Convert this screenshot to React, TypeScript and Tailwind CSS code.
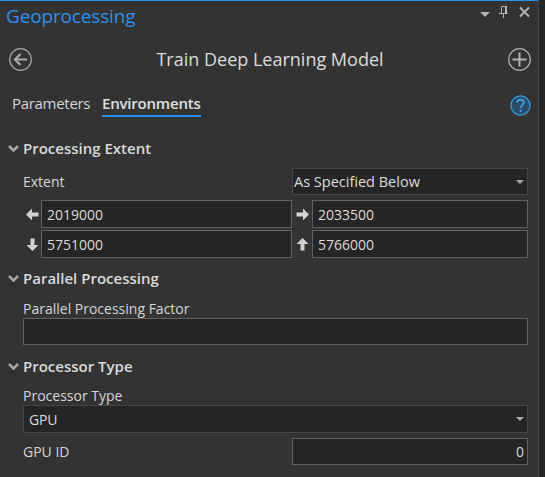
import type { ReactNode } from "react";

const field = "flex items-center border border-[#626262] bg-[#252525] text-[#dcdcdc]";
const select = "flex items-center border border-[#464646] bg-[#252525] text-[#dcdcdc]";

function Caret({ className = "" }: { className?: string }) {
  return (
    <svg className={`block h-1 w-2 shrink-0 ${className}`} viewBox="0 0 8 4">
      <path d="M0 0H8L4 4Z" fill="#a9a9a9" />
    </svg>
  );
}

function Arrow({ rotate = "" }: { rotate?: string }) {
  return (
    <svg className={`block h-[13px] w-[13px] shrink-0 ${rotate}`} viewBox="0 0 13 13">
      <path d="M0 6.5L6 0.5V4.5H12.5V8.5H6V12.5Z" fill="#d2d2d2" />
    </svg>
  );
}

function Heading({ children }: { children: ReactNode }) {
  return (
    <div className="flex h-5 items-center">
      <svg className="ml-2 block h-[9px] w-[11px]" viewBox="0 0 11 9">
        <path d="M1 2L5.5 6.5L10 2" fill="none" stroke="#a6a6a6" strokeWidth="2.6" />
      </svg>
      <h2 className="ml-1 text-[15px] leading-5 font-[550] text-[#dadada]">{children}</h2>
    </div>
  );
}

export default function App() {
  return (
    <div className="flex h-[477px] w-[545px] overflow-hidden bg-[#252525] font-['Open_Sans','Noto_Sans',sans-serif] text-[14px] whitespace-nowrap text-[#d6d6d6]">
      <main className="flex w-[539px] shrink-0 flex-col border-r border-[#454547] bg-[#333333]">
        <header className="flex h-10 shrink-0 items-start border-t border-[#2490f0] pl-[6px]">
          <h1 className="mt-[2px] text-[19px] leading-[26px] tracking-[-0.15px] text-[#2b91ee]">Geoprocessing</h1>
          <svg className="ml-auto block h-[22px] w-[59px]" viewBox="0 0 59 22">
            <path d="M1 11H11L6 16Z" fill="#b4b4b4" />
            <path d="M22.5 12V5.5H26.5M20 12.5H29M24.5 12.5V17" fill="none" stroke="#b4b4b4" />
            <path d="M27 5V12" stroke="#b4b4b4" strokeWidth="2" />
            <path d="M41 6.5L50 15.5M50 6.5L41 15.5" stroke="#b4b4b4" strokeWidth="1.9" />
          </svg>
        </header>
        <div className="flex h-[38px] shrink-0 items-center justify-between pr-[7px] pl-[9px]">
          <svg className="block h-[23px] w-[23px]" viewBox="0 0 23 23">
            <circle cx="11.5" cy="11.5" r="10.8" fill="none" stroke="#a9a9a9" strokeWidth="1.2" />
            <path d="M18 11.5H7M11.5 6L6 11.5L11.5 17" fill="none" stroke="#a9a9a9" strokeWidth="2.2" />
          </svg>
          <h2 className="text-[18px] leading-6 text-[#dcdcdc]">Train Deep Learning Model</h2>
          <svg className="block h-[23px] w-[23px]" viewBox="0 0 23 23">
            <circle cx="11.5" cy="11.5" r="10.8" fill="none" stroke="#b4b4b4" strokeWidth="1.2" />
            <path d="M4.5 11.5H18.5M11.5 4.5V18.5" stroke="#b4b4b4" strokeWidth="2" />
          </svg>
        </div>
        <nav className="mt-[15px] flex h-6 shrink-0 items-start pr-[7px] pl-3">
          <div className="w-[90px] text-[15px] leading-5 tracking-[-0.3px]">Parameters</div>
          <div className="h-6 w-[99px] border-b-2 border-[#2b91ee] text-[15px] leading-5 font-semibold tracking-[-0.2px] text-[#e0e0e0]">Environments</div>
          <svg className="mt-[1.5px] ml-auto block h-[21px] w-[21px]" viewBox="0 0 21 21">
            <circle cx="10.5" cy="10.5" r="9.6" fill="#294c68" stroke="#3e9bdc" strokeWidth="1.3" />
            <path d="M7.3 7.7C7.3 3.6 13.8 3.7 13.8 7.5C13.8 10 10.7 10 10.7 13.2M10.7 14.8V17" fill="none" stroke="#3e9bdc" strokeWidth="2" />
          </svg>
        </nav>

        <section className="mt-[21px] shrink-0">
          <Heading>Processing Extent</Heading>
          <div className="mt-[10px] flex h-[27px] items-center pr-[10px] pl-[23px]">
            <label className="w-[269px]">Extent</label>
            <div className={`${select} h-[27px] flex-1 pr-[3px] pl-px`}>
              <span className="text-[14.5px]">As Specified Below</span>
              <Caret className="ml-auto" />
            </div>
          </div>
          <div className="mt-[5px] grid grid-cols-[16px_251px_20px_216px] gap-y-[2px] pl-[25px]">
            <div className="flex items-center pl-px"><Arrow /></div>
            <div className={`${field} h-7 pl-[5px]`}>2019000</div>
            <div className="flex items-center pl-1"><Arrow rotate="rotate-180" /></div>
            <div className={`${field} h-7 pl-[5px]`}>2033500</div>
            <div className="flex items-center pl-px"><Arrow rotate="-rotate-90" /></div>
            <div className={`${field} h-7 pl-[5px]`}>5751000</div>
            <div className="flex items-center pl-1"><Arrow rotate="rotate-90" /></div>
            <div className={`${field} h-7 pl-[5px]`}>5766000</div>
          </div>
        </section>

        <section className="mt-[10px] shrink-0">
          <Heading>Parallel Processing</Heading>
          <label className="mt-[11px] block h-[19px] pl-[23px] leading-5">Parallel Processing Factor</label>
          <div className={`${field} ml-[23px] h-[27px] w-[505px]`} />
        </section>

        <section className="mt-[11px] shrink-0">
          <Heading>Processor Type</Heading>
          <label className="mt-[10px] block h-[19px] pl-[23px] leading-5">Processor Type</label>
          <div className={`${select} ml-[23px] h-7 w-[505px] pr-[3px] pl-[5px]`}>
            <span className="tracking-[-0.2px]">GPU</span>
            <Caret className="ml-auto" />
          </div>
          <div className="mt-[5px] flex h-[27px] items-center pr-[10px] pl-[23px]">
            <label className="w-[269px]">GPU ID</label>
            <div className={`${field} h-[27px] flex-1 justify-end pr-[3px]`}>0</div>
          </div>
        </section>
      </main>
    </div>
  );
}
